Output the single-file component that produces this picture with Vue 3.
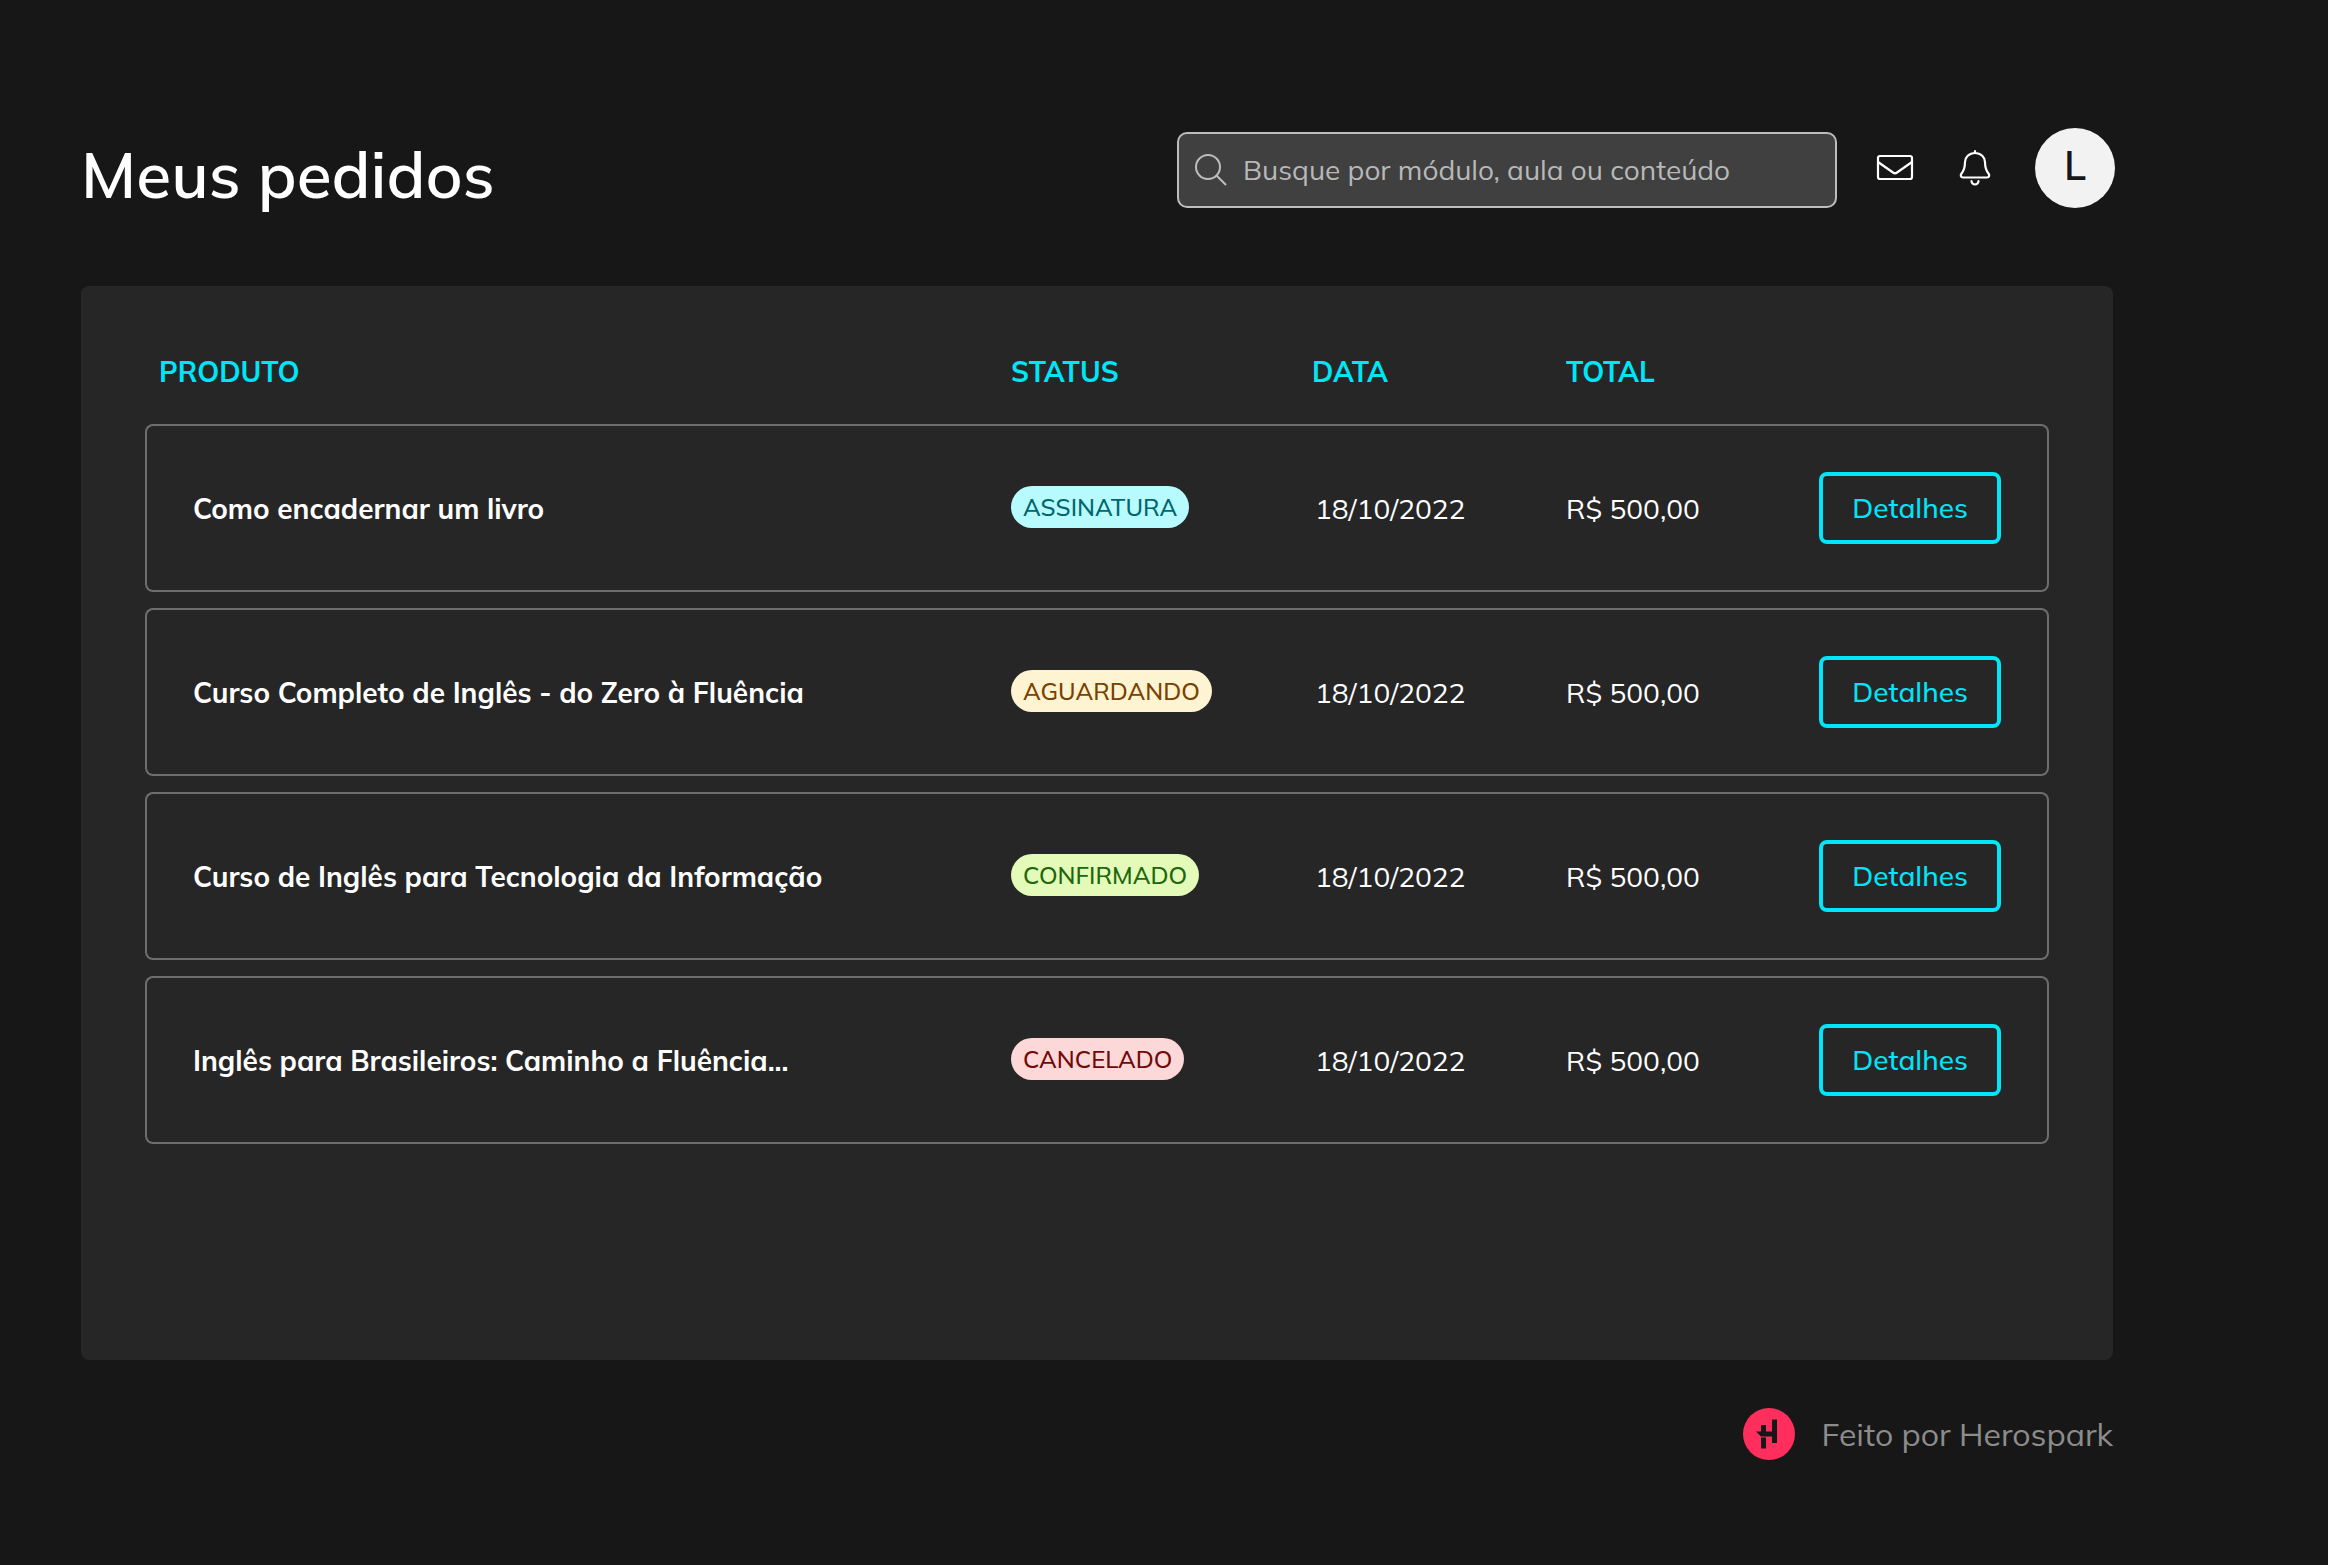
<script setup>
import { ref } from 'vue'

const search = ref('')

const orders = [
  { product: 'Como encadernar um livro', status: 'ASSINATURA', tone: 'subscription', date: '18/10/2022', total: 'R$ 500,00' },
  { product: 'Curso Completo de Inglês - do Zero à Fluência', status: 'AGUARDANDO', tone: 'waiting', date: '18/10/2022', total: 'R$ 500,00' },
  { product: 'Curso de Inglês para Tecnologia da Informação', status: 'CONFIRMADO', tone: 'confirmed', date: '18/10/2022', total: 'R$ 500,00' },
  { product: 'Inglês para Brasileiros: Caminho a Fluência...', status: 'CANCELADO', tone: 'cancelled', date: '18/10/2022', total: 'R$ 500,00' },
]
</script>

<template>
  <div class="page">
    <header class="topbar">
      <h1 class="title">Meus pedidos</h1>
      <div class="tools">
        <label class="search">
          <svg class="search-icon" viewBox="0 0 34 34" aria-hidden="true">
            <circle cx="14" cy="14" r="12" />
            <path d="M22.500 22.500L32 32" />
          </svg>
          <input v-model="search" type="search" aria-label="Buscar" placeholder="Busque por módulo, aula ou conteúdo" />
        </label>
        <button class="icon-button" type="button" aria-label="Mensagens">
          <svg viewBox="0 0 40 40" aria-hidden="true">
            <rect x="3" y="8" width="34" height="23" rx="2" />
            <path d="M3 14L18 24.500Q20 26 22 24.500L37 14" />
          </svg>
        </button>
        <button class="icon-button" type="button" aria-label="Notificações">
          <svg viewBox="0 0 40 40" aria-hidden="true">
            <path d="M20 3V5M20 5C14 5 10 9.500 10 14C10 20 9 22.500 6.500 25.500C5.200 27.300 5.700 29.500 8 29.500H32C34.300 29.500 34.800 27.300 33.500 25.500C31 22.500 30 20 30 14C30 9.500 26 5 20 5Z" />
            <path d="M16.500 33A3.500 3.500 0 0 0 23.500 33" />
          </svg>
        </button>
        <button class="avatar" type="button" aria-label="Conta de L">L</button>
      </div>
    </header>

    <main class="panel">
      <table class="orders">
        <colgroup>
          <col />
          <col class="col-status" />
          <col class="col-date" />
          <col class="col-total" />
          <col class="col-action" />
        </colgroup>
        <thead>
          <tr>
            <th scope="col">PRODUTO</th>
            <th scope="col">STATUS</th>
            <th scope="col">DATA</th>
            <th scope="col">TOTAL</th>
            <td></td>
          </tr>
        </thead>
        <tbody>
          <tr v-for="order in orders" :key="order.product">
            <td class="text product">{{ order.product }}</td>
            <td class="status"><span class="badge" :class="order.tone">{{ order.status }}</span></td>
            <td class="text date">{{ order.date }}</td>
            <td class="text">{{ order.total }}</td>
            <td><button class="details" type="button">Detalhes</button></td>
          </tr>
        </tbody>
      </table>
    </main>

    <footer class="credit">
      <svg class="brand" viewBox="0 0 52 52" aria-hidden="true">
        <circle cx="26" cy="26" r="26" fill="#ff2e5d" />
        <path d="M18 17h5v6.500h6V11.500h5v23.500h-5v-6.500h-11L13 23.500h5zM18 29.500h5v11h-5z" fill="#171717" />
      </svg>
      <span>Feito por Herospark</span>
    </footer>
  </div>
</template>

<style>
body {
  margin: 0;
  background: #171717;
}
</style>

<style scoped>
.page {
  box-sizing: border-box;
  min-height: 100vh;
  padding: 127px 215px 64px 81px;
  background: #171717;
  color: #fff;
  font-family: Mulish, "Open Sans", "Noto Sans", sans-serif;
  font-size: 28px;
  line-height: 40px;
}

button,
input {
  font: inherit;
}

.topbar {
  display: flex;
  justify-content: space-between;
  align-items: flex-start;
  height: 159px;
}

.title {
  margin: 0;
  font-size: 64px;
  font-weight: 600;
  line-height: 94px;
}

.tools {
  display: flex;
  align-items: center;
  margin-right: -2px;
}

.search {
  box-sizing: border-box;
  display: flex;
  align-items: center;
  gap: 15px;
  width: 660px;
  height: 76px;
  margin: 5px 38px 0 0;
  padding: 0 15px;
  border: 2px solid #bdbdbd;
  border-radius: 10px;
  background: #404040;
}

.search-icon {
  flex: none;
  width: 34px;
  height: 34px;
  fill: none;
  stroke: #bdbdbd;
  stroke-width: 2;
}

.search input {
  flex: 1;
  min-width: 0;
  padding: 0;
  border: 0;
  outline: 0;
  background: none;
  color: #fff;
}

.search input::placeholder {
  color: #b8b8b8;
  opacity: 1;
}

.icon-button {
  width: 40px;
  height: 40px;
  margin-right: 40px;
  padding: 0;
  border: 0;
  background: none;
}

.icon-button svg {
  display: block;
  fill: none;
  stroke: #fff;
  stroke-width: 2.2;
  stroke-linecap: round;
  stroke-linejoin: round;
}

.avatar {
  width: 80px;
  height: 80px;
  padding: 0 0 6px;
  border: 0;
  border-radius: 50%;
  background: #f2f2f2;
  color: #171717;
  font-size: 40px;
  font-weight: 600;
}

.panel {
  padding: 34px 64px 200px;
  border-radius: 8px;
  background: #262626;
}

.orders {
  width: 100%;
  table-layout: fixed;
  border-collapse: separate;
  border-spacing: 0 16px;
}

.col-status {
  width: 301px;
}

.col-date {
  width: 254px;
}

.col-total {
  width: 253px;
}

.col-action {
  width: 230px;
}

.orders th {
  height: 72px;
  padding: 0;
  color: #00e5f8;
  font-weight: 700;
  text-align: left;
}

.orders th:first-child {
  padding-left: 14px;
}

.orders tbody td {
  box-sizing: border-box;
  height: 168px;
  padding: 0;
  border: solid #6e6e6e;
  border-width: 2px 0;
}

.orders tbody td:first-child {
  padding-left: 46px;
  border-left-width: 2px;
  border-radius: 8px 0 0 8px;
}

.orders tbody td:last-child {
  border-right-width: 2px;
  border-radius: 0 8px 8px 0;
}

.orders tbody .text {
  padding-top: 2px;
}

.orders tbody .status {
  padding-bottom: 2px;
}

.orders tbody .date {
  padding-left: 3px;
}

.orders .product {
  font-weight: 700;
}

.badge {
  display: block;
  width: fit-content;
  padding: 0 12px;
  border-radius: 21px;
  font-size: 24px;
  font-weight: 500;
  line-height: 42px;
}

.subscription {
  background: #b8fbff;
  color: #00666e;
}

.waiting {
  background: #fff4d1;
  color: #7a4100;
}

.confirmed {
  background: #e3fab8;
  color: #20660c;
}

.cancelled {
  background: #fdd8d8;
  color: #730808;
}

.details {
  display: block;
  box-sizing: border-box;
  width: 182px;
  height: 72px;
  padding: 0;
  border: 4px solid #00e5f8;
  border-radius: 8px;
  background: none;
  color: #00e5f8;
  font-weight: 500;
}

.credit {
  display: flex;
  justify-content: flex-end;
  align-items: center;
  gap: 27px;
  padding-top: 48px;
  color: #8c8c8c;
  font-size: 32px;
}

.brand {
  width: 52px;
  height: 52px;
}
</style>
